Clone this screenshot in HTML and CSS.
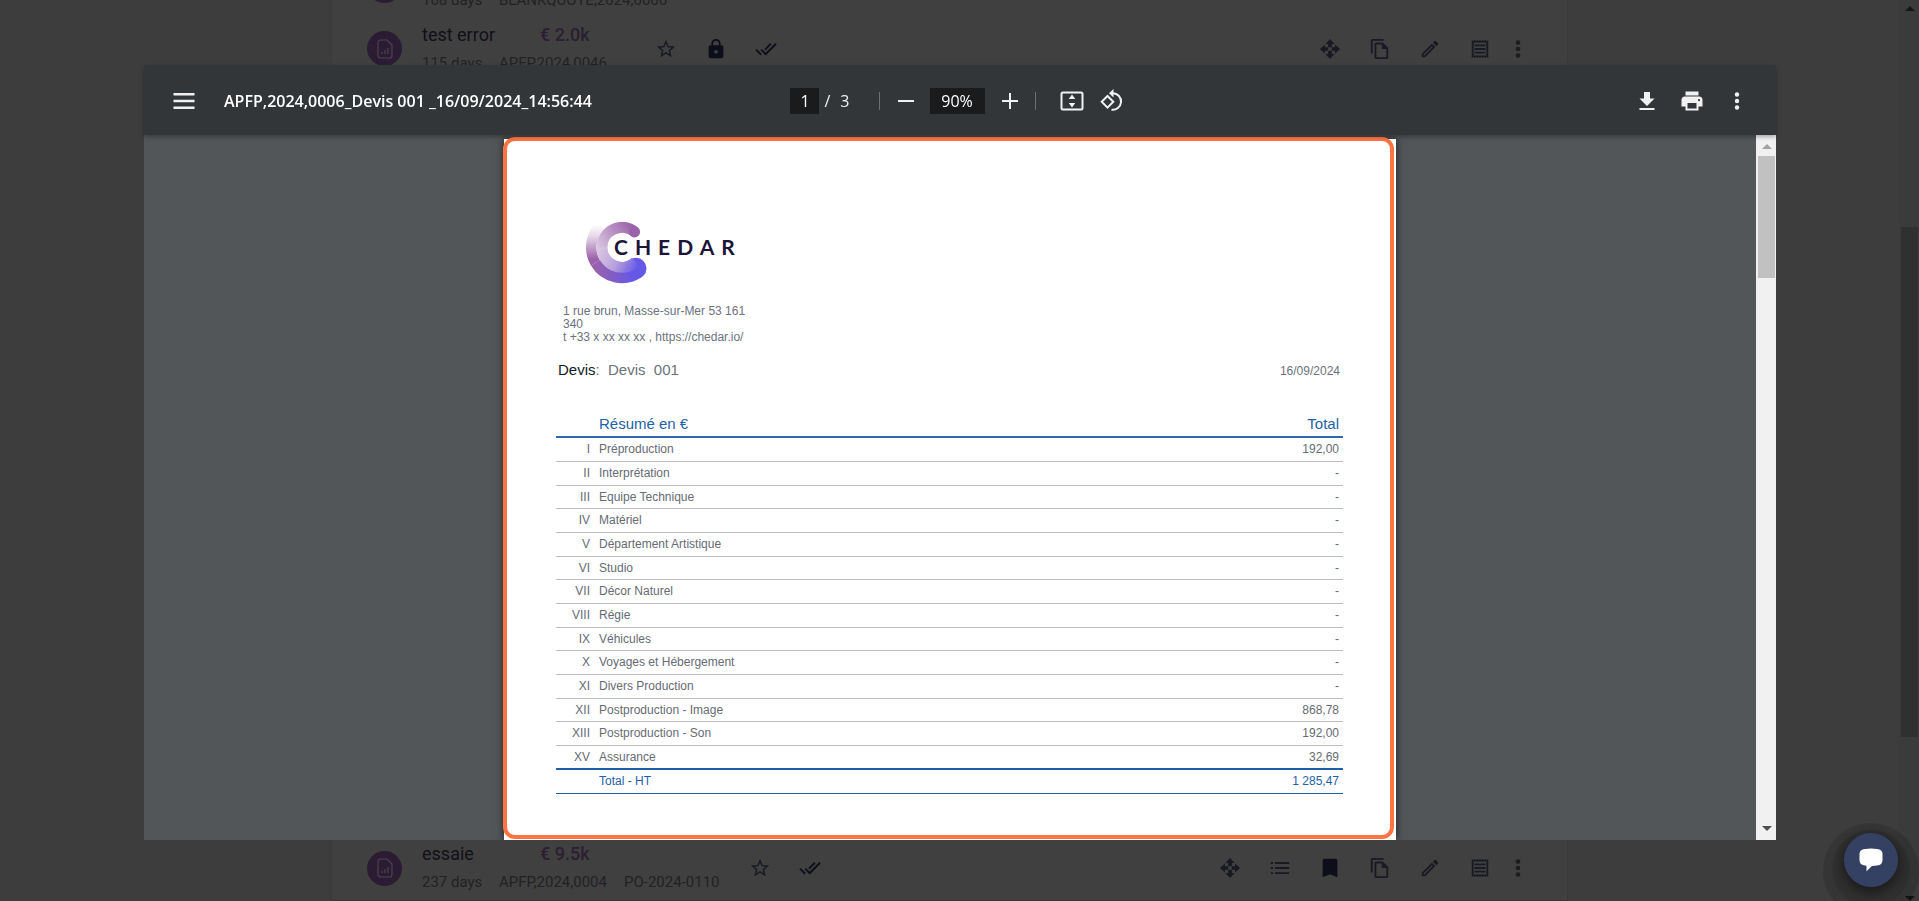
FILE: index.html
```html
<!DOCTYPE html>
<html lang="fr">
<head>
<meta charset="utf-8">
<title>Devis 001</title>
<link rel="stylesheet" href="styles.css">
</head>
<body>
<svg class="defs" aria-hidden="true">
  <symbol id="i-doc" viewBox="0 0 16 20"><path d="M3.500 1h6.500l5 5v10.500a2.500 2.500 0 0 1-2.500 2.500h-9A2.500 2.500 0 0 1 1 16.500v-13A2.500 2.500 0 0 1 3.500 1zM5 15v-2M8 15v-4M11 15V9" fill="none" stroke="currentColor" stroke-width="1.200"/></symbol>
  <symbol id="i-star" viewBox="0 0 24 24"><path d="M22 9.240l-7.190-.62L12 2 9.190 8.630 2 9.240l5.460 4.730L5.820 21 12 17.270 18.180 21l-1.630-7.030L22 9.240zM12 15.400l-3.760 2.270 1-4.280-3.320-2.880 4.380-.38L12 6.100l1.710 4.040 4.380.38-3.320 2.880 1 4.280L12 15.400z"/></symbol>
  <symbol id="i-lock" viewBox="0 0 24 24"><path d="M18 8h-1V6c0-2.760-2.240-5-5-5S7 3.240 7 6v2H6c-1.100 0-2 .9-2 2v10c0 1.100.9 2 2 2h12c1.100 0 2-.9 2-2V10c0-1.100-.9-2-2-2zm-6 9c-1.100 0-2-.9-2-2s.9-2 2-2 2 .9 2 2-.9 2-2 2zm3.100-9H8.900V6c0-1.710 1.390-3.100 3.100-3.100s3.100 1.390 3.100 3.100v2z"/></symbol>
  <symbol id="i-done" viewBox="0 0 24 24"><path d="M18 7l-1.410-1.410-6.340 6.340 1.410 1.410L18 7zm4.240-1.410L11.660 16.170 7.480 12l-1.410 1.410L11.660 19l12-12-1.420-1.410zM.41 13.410L6 19l1.410-1.410L1.830 12 .41 13.410z"/></symbol>
  <symbol id="i-move" viewBox="0 0 24 24"><path d="M12 1l5 5.500h-3V10h-4V6.500H7zM12 23l-5-5.500h3V14h4v3.500h3zM1 12l5.500-5v3H10v4H6.500v3zM23 12l-5.500 5v-3H14v-4h3.500V7z"/></symbol>
  <symbol id="i-list" viewBox="0 0 24 24"><path d="M2 5.500h2.500v2H2zM2 11h2.500v2H2zM2 16.500h2.500v2H2zM6.500 5.500H22v2H6.500zM6.500 11H22v2H6.500zM6.500 16.500H22v2H6.500z"/></symbol>
  <symbol id="i-mark" viewBox="0 0 24 24"><path d="M18 2H6a2 2 0 0 0-2 2v18l8-3.200L20 22V4a2 2 0 0 0-2-2z"/></symbol>
  <symbol id="i-copy" viewBox="0 0 24 24"><path d="M16 1H4c-1.100 0-2 .9-2 2v14h2V3h12V1zm-1 4H8c-1.100 0-2 .9-2 2v14c0 1.100.9 2 2 2h11c1.100 0 2-.9 2-2V11l-6-6zM8 21V7h6v5h5v9H8z"/></symbol>
  <symbol id="i-edit" viewBox="0 0 24 24"><path d="M14.060 9.020l.92.92L5.920 19H5v-.92l9.060-9.060M17.660 3c-.25 0-.51.100-.7.290l-1.830 1.830 3.750 3.750 1.830-1.830c.39-.39.39-1.020 0-1.410l-2.340-2.340c-.2-.2-.45-.29-.71-.29zm-3.600 3.190L3 17.250V21h3.750L17.810 9.940l-3.750-3.750z"/></symbol>
  <symbol id="i-bill" viewBox="0 0 24 24"><path d="M19.500 3.500L18 2l-1.500 1.500L15 2l-1.500 1.500L12 2l-1.500 1.500L9 2 7.500 3.500 6 2 4.500 3.500 3 2v20l1.500-1.500L6 22l1.500-1.500L9 22l1.500-1.500L12 22l1.500-1.500L15 22l1.500-1.500L18 22l1.500-1.500L21 22V2l-1.500 1.500zM19 19.100H5V4.900h14v14.200zM6 15h12v2H6zm0-4h12v2H6zm0-4h12v2H6z"/></symbol>
  <symbol id="i-dots" viewBox="0 0 24 24"><circle cx="12" cy="5" r="2.500"/><circle cx="12" cy="12" r="2.500"/><circle cx="12" cy="19" r="2.500"/></symbol>
</svg>

<main class="app">
  <ul class="list">
    <li class="row">
      <span class="badge"><svg><use href="#i-doc"/></svg></span>
      <div class="info">
        <div class="head"><span class="name"></span><span class="price"></span></div>
        <div class="meta"><span class="age">108 days</span><span>BLANKQUOTE,2024,0006</span></div>
      </div>
    </li>
    <li class="row">
      <span class="badge"><svg><use href="#i-doc"/></svg></span>
      <div class="info">
        <div class="head"><span class="name">test error</span><span class="price">€ 2.0k</span></div>
        <div class="meta"><span class="age">115 days</span><span>APFP,2024,0046</span></div>
      </div>
      <div class="icons">
        <button class="ico" aria-label="Favori"><svg><use href="#i-star"/></svg></button>
        <button class="ico dark" aria-label="Verrouiller"><svg><use href="#i-lock"/></svg></button>
        <button class="ico dark" aria-label="Valider"><svg><use href="#i-done"/></svg></button>
      </div>
      <div class="icons end">
        <button class="ico" aria-label="Déplacer"><svg><use href="#i-move"/></svg></button>
        <button class="ico" aria-label="Copier"><svg><use href="#i-copy"/></svg></button>
        <button class="ico" aria-label="Modifier"><svg><use href="#i-edit"/></svg></button>
        <button class="ico" aria-label="Facture"><svg><use href="#i-bill"/></svg></button>
      </div>
      <button class="ico more" aria-label="Plus"><svg><use href="#i-dots"/></svg></button>
    </li>
    <li class="row last">
      <span class="badge"><svg><use href="#i-doc"/></svg></span>
      <div class="info">
        <div class="head"><span class="name">essaie</span><span class="price">€ 9.5k</span></div>
        <div class="meta"><span class="age">237 days</span><span>APFP,2024,0004</span><span>PO-2024-0110</span></div>
      </div>
      <div class="icons">
        <button class="ico" aria-label="Favori"><svg><use href="#i-star"/></svg></button>
        <button class="ico dark" aria-label="Valider"><svg><use href="#i-done"/></svg></button>
      </div>
      <div class="icons end">
        <button class="ico" aria-label="Déplacer"><svg><use href="#i-move"/></svg></button>
        <button class="ico" aria-label="Liste"><svg><use href="#i-list"/></svg></button>
        <button class="ico dark" aria-label="Signet"><svg><use href="#i-mark"/></svg></button>
        <button class="ico" aria-label="Copier"><svg><use href="#i-copy"/></svg></button>
        <button class="ico" aria-label="Modifier"><svg><use href="#i-edit"/></svg></button>
        <button class="ico" aria-label="Facture"><svg><use href="#i-bill"/></svg></button>
      </div>
      <button class="ico more" aria-label="Plus"><svg><use href="#i-dots"/></svg></button>
    </li>
  </ul>
  <div class="page-scroll">
    <svg class="tri" viewBox="0 0 10 5"><path d="M0 5l5-5 5 5z"/></svg>
    <div class="page-thumb"></div>
    <svg class="tri" viewBox="0 0 10 5"><path d="M0 0l5 5 5-5z"/></svg>
  </div>
</main>

<section class="modal" role="dialog" aria-label="Aperçu du devis">
  <header class="toolbar">
    <div class="tb-left">
      <button class="tool" aria-label="Menu"><svg viewBox="0 0 24 24"><path d="M1.500 4h21v2.500h-21zM1.500 10.700h21v2.500h-21zM1.500 17.500h21V20h-21z"/></svg></button>
      <h1 class="title">APFP,2024,0006_Devis 001 _16/09/2024_14:56:44</h1>
    </div>
    <div class="tb-mid">
      <input class="field page-no" value="1" aria-label="Page">
      <span class="pages"><span>/</span><span>3</span></span>
      <span class="sep"></span>
      <button class="tool" aria-label="Zoom arrière"><svg viewBox="0 0 24 24"><path d="M4 11h16v2H4z"/></svg></button>
      <input class="field zoom" value="90%" aria-label="Zoom">
      <button class="tool" aria-label="Zoom avant"><svg viewBox="0 0 24 24"><path d="M4 11h7V4h2v7h7v2h-7v7h-2v-7H4z"/></svg></button>
      <span class="sep"></span>
      <button class="tool fit" aria-label="Ajuster à la page"><svg viewBox="0 0 24 24"><rect x="1.500" y="3.500" width="21" height="17" rx="1.500" fill="none" stroke="currentColor" stroke-width="2"/><path d="M12 5.500l3.300 4.500H8.700zM12 18.500l3.300-4.500H8.700z"/></svg></button>
      <button class="tool" aria-label="Pivoter"><svg viewBox="0 0 24 24"><path d="M7.500 7l-5.800 5.800 5.800 5.800 5.800-5.800z" fill="none" stroke="currentColor" stroke-width="2"/><path d="M11.500 4.200h1.500a8.300 8.300 0 1 1-1.500 16.500" fill="none" stroke="currentColor" stroke-width="2"/><path d="M13.500 0v8.500L9 4.200z"/></svg></button>
    </div>
    <div class="tb-right">
      <button class="tool" aria-label="Télécharger"><svg viewBox="0 0 24 24"><path d="M19.500 9.500h-4.500V3H9v6.500H4.500L12 17zM4.500 19v2h15v-2z"/></svg></button>
      <button class="tool" aria-label="Imprimer"><svg viewBox="0 0 24 24"><path d="M19 7.500H5a3.500 3.500 0 0 0-3.500 3.500v6.500h4V21.500h13v-4h4V11A3.500 3.500 0 0 0 19 7.500zM16.500 19.500h-9V14h9zM19 12.200a1.100 1.100 0 1 1 0-2.200 1.100 1.100 0 0 1 0 2.200zM18.500 2.500h-13v4h13z"/></svg></button>
      <button class="tool" aria-label="Plus d’actions"><svg viewBox="0 0 24 24"><circle cx="12" cy="5.500" r="2.200"/><circle cx="12" cy="12" r="2.200"/><circle cx="12" cy="18.500" r="2.200"/></svg></button>
    </div>
  </header>
  <div class="viewer">
    <div class="canvas">
      <article class="sheet">
        <svg class="logo" viewBox="0 0 160 62" role="img" aria-label="Chedar">
          <defs>
            <linearGradient id="g1" gradientUnits="userSpaceOnUse" x1="0" y1="2" x2="0" y2="37"><stop offset="0" stop-color="#fff"/><stop offset=".35" stop-color="#e6d8ea"/><stop offset="1" stop-color="#9a62aa"/></linearGradient>
            <linearGradient id="g2" gradientUnits="userSpaceOnUse" x1="8" y1="0" x2="48" y2="0"><stop offset="0" stop-color="#9a62aa"/><stop offset="1" stop-color="#6558e6"/></linearGradient>
            <linearGradient id="g3" gradientUnits="userSpaceOnUse" x1="14" y1="30" x2="48" y2="6"><stop offset="0" stop-color="#dbc9e2"/><stop offset="1" stop-color="#9a62aa"/></linearGradient>
            <linearGradient id="g4" gradientUnits="userSpaceOnUse" x1="12" y1="26" x2="52" y2="46"><stop offset="0" stop-color="#dbc9e2"/><stop offset=".5" stop-color="#b9a2dc"/><stop offset="1" stop-color="#6558e6"/></linearGradient>
          </defs>
          <g fill="none">
            <path d="M14.300 3.700A30.750 30.750 0 0 0 9.400 40.900" stroke="url(#g1)" stroke-width="10.500"/>
            <path d="M13.900 38.200A25.500 25.500 0 0 0 50 46.300" stroke="url(#g2)" stroke-width="21"/>
            <path d="M50 46.300v.1" stroke="#6558e6" stroke-width="21" stroke-linecap="round"/>
            <path d="M16 25.500A20 20 0 0 0 49.500 40" stroke="url(#g4)" stroke-width="11"/>
            <path d="M49 10.200A20 20 0 0 0 16 26" stroke="url(#g3)" stroke-width="11"/>
            <path d="M48.500 9.900h.1" stroke="#9a62aa" stroke-width="11" stroke-linecap="round"/>
          </g>
          <text class="logo-text" x="28" y="33">CHEDAR</text>
        </svg>
        <address class="address">1 rue brun, Masse-sur-Mer 53 161 340<br>t +33 x xx xx xx , https://chedar.io/</address>
        <div class="quote">
          <p class="quote-name"><b>Devis</b>:&nbsp; Devis&nbsp; 001</p>
          <time class="date">16/09/2024</time>
        </div>
        <table class="summary">
          <thead><tr><th class="num"></th><th>Résumé en €</th><th class="amt">Total</th></tr></thead>
          <tbody>
            <tr><td class="num">I</td><td>Préproduction</td><td class="amt">192,00</td></tr>
            <tr><td class="num">II</td><td>Interprétation</td><td class="amt">-</td></tr>
            <tr><td class="num">III</td><td>Equipe Technique</td><td class="amt">-</td></tr>
            <tr><td class="num">IV</td><td>Matériel</td><td class="amt">-</td></tr>
            <tr><td class="num">V</td><td>Département Artistique</td><td class="amt">-</td></tr>
            <tr><td class="num">VI</td><td>Studio</td><td class="amt">-</td></tr>
            <tr><td class="num">VII</td><td>Décor Naturel</td><td class="amt">-</td></tr>
            <tr><td class="num">VIII</td><td>Régie</td><td class="amt">-</td></tr>
            <tr><td class="num">IX</td><td>Véhicules</td><td class="amt">-</td></tr>
            <tr><td class="num">X</td><td>Voyages et Hébergement</td><td class="amt">-</td></tr>
            <tr><td class="num">XI</td><td>Divers Production</td><td class="amt">-</td></tr>
            <tr><td class="num">XII</td><td>Postproduction - Image</td><td class="amt">868,78</td></tr>
            <tr><td class="num">XIII</td><td>Postproduction - Son</td><td class="amt">192,00</td></tr>
            <tr><td class="num">XV</td><td>Assurance</td><td class="amt">32,69</td></tr>
          </tbody>
          <tfoot><tr><td class="num"></td><td>Total - HT</td><td class="amt">1 285,47</td></tr></tfoot>
        </table>
        <div class="frame"></div>
      </article>
    </div>
    <div class="scroll">
      <svg class="tri up" viewBox="0 0 10 5"><path d="M0 5l5-5 5 5z"/></svg>
      <div class="thumb"></div>
      <svg class="tri down" viewBox="0 0 10 5"><path d="M0 0l5 5 5-5z"/></svg>
    </div>
  </div>
</section>

<button class="chat" aria-label="Chat"><svg viewBox="0 0 26 24"><path d="M7 1Q13 .2 19 1q5.500 .6 5.500 5v6q0 5-5.500 5.500l-5 .4-5.500 5.300v-5.400L7 17.500Q1.500 17 1.500 12V6Q1.500 1.600 7 1z"/></svg></button>
</body>
</html>
```
FILE: styles.css
```css
* { box-sizing: border-box; }
body {
  margin: 0;
  height: 100vh;
  overflow: hidden;
  background: #3d3d3d;
  font-family: Roboto, "Liberation Sans", sans-serif;
}
button {
  padding: 0;
  border: 0;
  background: none;
  color: inherit;
  cursor: pointer;
}
svg { display: block; fill: currentColor; }
.defs { position: absolute; width: 0; height: 0; }

/* dimmed list behind the dialog */
.app { display: flex; height: 100vh; overflow: hidden; }
.list {
  display: flex;
  flex-direction: column;
  flex: 1;
  margin: 0 331px;
  padding: 0;
  list-style: none;
  background: #404040;
  border: solid #393939;
  border-width: 0 1px;
}
.row {
  display: flex;
  align-items: center;
  flex: none;
  height: 63px;
  padding: 0 37px 0 35px;
}
.row:first-child { margin-top: -46px; }
.row.last { margin-top: auto; border-bottom: 1px solid #353535; height: 65px; }
.badge {
  display: flex;
  align-items: center;
  justify-content: center;
  width: 35px;
  height: 35px;
  margin-right: 20px;
  border-radius: 50%;
  background: #2b1c33;
  color: #4c4350;
}
.badge svg { width: 16px; height: 20px; }
.info { min-width: 232px; padding-right: 28px; }
.head { display: flex; height: 28px; line-height: 28px; font-size: 18px; }
.name { width: 118px; color: #101018; }
.price { font-weight: 500; color: #2b1e31; }
.meta {
  display: flex;
  gap: 17px;
  line-height: 28px;
  font-size: 15px;
  color: #222224;
  white-space: nowrap;
}
.age { width: 60px; }
.icons { display: flex; gap: 26px; }
.icons.end { margin-left: auto; }
.ico { width: 24px; height: 24px; color: #181a23; }
.ico svg { width: 22px; height: 22px; margin: 0 auto; }
.ico.dark { color: #0c0e19; }
.ico.more { margin-left: 14px; color: #1c1c1e; }
.page-scroll {
  display: flex;
  flex-direction: column;
  align-items: center;
  width: 20px;
  padding: 6px 1px 0 2px;
  background: #3b3b3b;
  color: #161616;
}
.page-thumb { width: 17px; height: 510px; margin: 216px 0 auto; background: #303030; }
.tri { width: 10px; height: 5px; flex: none; }

/* dialog */
.modal {
  position: fixed;
  top: 65px;
  bottom: 61px;
  left: 144px;
  right: 143px;
  display: flex;
  flex-direction: column;
}
.toolbar {
  display: grid;
  grid-template-columns: 1fr auto 1fr;
  align-items: center;
  flex: none;
  height: 70px;
  padding: 2px 34px 0 28px;
  background: #323639;
  color: #f1f1f1;
  box-shadow: 0 2px 4px rgba(0, 0, 0, .3);
  z-index: 1;
  font-family: "Open Sans", "Noto Sans", sans-serif;
}
.tb-left, .tb-mid, .tb-right { display: flex; align-items: center; }
.tb-left { gap: 28px; }
.tb-right { justify-content: flex-end; gap: 21px; margin-right: -7px; }
.title { margin: 0; font-size: 16px; font-weight: 600; color: #fff; white-space: nowrap; }
.tool { width: 24px; height: 24px; }
.tool svg { width: 24px; height: 24px; }
.tool.fit { margin: 0 16px 0 24px; }
.field {
  height: 26px;
  padding: 0;
  border: 0;
  background: #191b1c;
  color: #fff;
  text-align: center;
  font-family: inherit;
  font-size: 16px;
}
.page-no { width: 29px; }
.zoom { width: 55px; margin: 0 13px 0 12px; }
.pages { display: flex; gap: 10px; margin: 0 29px 0 5px; font-size: 16px; }
.sep { width: 1px; height: 18px; background: #6c6f71; }
.sep + .tool { margin-left: 14px; }
.tool + .sep { margin-left: 13px; }
.sep + .tool.fit { margin-left: 24px; }

.viewer { display: flex; flex: 1; min-height: 0; background: #525659; }
.canvas {
  display: flex;
  justify-content: center;
  flex: 1;
  padding-top: 4px;
  overflow: hidden;
}
.scroll {
  display: flex;
  flex-direction: column;
  align-items: center;
  width: 20px;
  padding: 9px 1px 9px 2px;
  background: #f1f1f1;
}
.thumb { width: 17px; height: 122px; margin: 7px 0 auto; background: #c1c1c1; }
.tri.up { color: #a3a3a3; }
.tri.down { color: #505050; }

/* document */
.sheet {
  position: relative;
  width: 892px;
  padding: 83px 53px 0 52px;
  background: #fff;
  box-shadow: 0 0 8px rgba(0, 0, 0, .6);
  color: #6b7280;
  font-family: "Liberation Sans", Arial, sans-serif;
  font-size: 12px;
}
.frame {
  position: absolute;
  inset: -2px 2px 1px -1px;
  border: 4px solid #ff7443;
  border-radius: 12px;
}
.logo { width: 160px; height: 62px; margin-left: 30px; }
.logo-text {
  font-family: Lato, sans-serif;
  font-size: 21px;
  font-weight: 700;
  letter-spacing: 7px;
  fill: #1c1539;
}
.address {
  width: 190px;
  margin: 21px 0 16px 7px;
  line-height: 13px;
  font-style: normal;
}
.quote {
  display: flex;
  justify-content: space-between;
  align-items: flex-start;
  margin: 0 3px 27px 2px;
}
.quote-name { margin: 0; font-size: 15px; line-height: 20px; }
.quote-name b { font-weight: 400; color: #111827; }
.date { line-height: 23px; }
.summary { width: 100%; border-collapse: collapse; color: #666b74; }
.summary td, .summary th { padding: 0; text-align: left; font-weight: 400; }
.summary th { height: 27px; font-size: 15px; color: #1f61a8; border-bottom: 2px solid #2c69ad; }
.summary td { height: 24px; border-bottom: 1px solid #bdbdbd; }
.summary tbody tr:nth-child(3n) td { height: 23px; }
.summary tbody tr:last-child td { border-bottom: 2px solid #1f5fa6; }
.summary tfoot td { color: #1f61a8; border-bottom: 1px solid #1f5fa6; }
.summary .num { width: 43px; padding-right: 9px; text-align: right; }
.summary .amt { padding-right: 4px; text-align: right; }

.chat {
  position: fixed;
  right: 21px;
  bottom: 14px;
  display: flex;
  align-items: center;
  justify-content: center;
  width: 54px;
  height: 54px;
  border-radius: 50%;
  background: #344163;
  color: #fff;
  box-shadow: 0 11px 0 21px rgba(0, 0, 0, .12), 0 9px 0 12px rgba(0, 0, 0, .1), 0 4px 12px 2px rgba(0, 0, 0, .45);
}
.chat svg { width: 26px; height: 24px; }
```
